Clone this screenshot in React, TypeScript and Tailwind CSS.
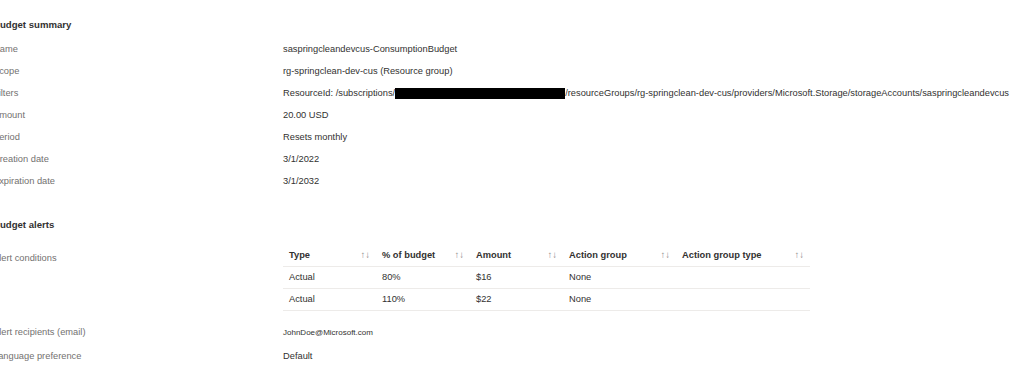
import { ReactNode } from "react";

const summary = [
  ["Name", "saspringcleandevcus-ConsumptionBudget"],
  ["Scope", "rg-springclean-dev-cus (Resource group)"],
  ["Filters", null],
  ["Amount", "20.00 USD"],
  ["Period", "Resets monthly"],
  ["Creation date", "3/1/2022"],
  ["Expiration date", "3/1/2032"],
];

const columns = [
  { label: "Type", w: "w-[93px]" },
  { label: "% of budget", w: "w-[94px]" },
  { label: "Amount", w: "w-[93px]" },
  { label: "Action group", w: "w-[113px]" },
  { label: "Action group type", w: "w-[134px]" },
];

const alerts = [
  ["Actual", "80%", "$16", "None", ""],
  ["Actual", "110%", "$22", "None", ""],
];

function Row({ label, children }: { label: string; children: ReactNode }) {
  return (
    <div className="flex h-[22px] items-center">
      <div className="w-[290px] shrink-0 text-[#737170]">{label}</div>
      <div className="whitespace-nowrap text-[#323130]">{children}</div>
    </div>
  );
}

function SortIcon() {
  return <span className="text-[9.5px] text-[#8a8886]">↑↓</span>;
}

export default function App() {
  return (
    <div className="h-[371px] w-[1024px] overflow-hidden bg-white">
      <div
        className="-ml-[7px] pt-[14px] text-[9.3px] text-[#323130]"
        style={{ fontFamily: '"Liberation Sans", Arial, sans-serif' }}
      >
        <div className="flex h-[22px] items-center text-[9.6px] font-bold">Budget summary</div>
        <div className="mt-[3px]">
          {summary.map(([label, value]) => (
            <Row key={label} label={label as string}>
              {value ?? (
                <>
                  ResourceId: /subscriptions/
                  <span className="inline-block h-[11px] w-[170px] bg-black align-middle" />
                  /resourceGroups/rg-springclean-dev-cus/providers/Microsoft.Storage/storageAccounts/saspringcleandevcus
                </>
              )}
            </Row>
          ))}
        </div>

        <div className="mt-[21px] flex h-[22px] items-center text-[9.6px] font-bold">Budget alerts</div>

        <div className="mt-[9px] flex">
          <div className="w-[290px] shrink-0 pt-[3px] text-[#737170]">
            <div className="flex h-[22px] items-center">Alert conditions</div>
          </div>
          <div>
            <div className="flex h-[22px] items-center border-b border-[#edebe9] font-semibold">
              {columns.map((c) => (
                <div key={c.label} className={`${c.w} flex items-center justify-between px-[6px]`}>
                  <span>{c.label}</span>
                  <SortIcon />
                </div>
              ))}
            </div>
            {alerts.map((r, i) => (
              <div key={i} className="flex h-[22px] items-center border-b border-[#edebe9]">
                {r.map((cell, j) => (
                  <div key={j} className={`${columns[j].w} px-[6px]`}>
                    {cell}
                  </div>
                ))}
              </div>
            ))}
          </div>
        </div>

        <div className="mt-[11px] flex h-[22px] items-center">
          <div className="w-[290px] shrink-0 text-[#737170]">Alert recipients (email)</div>
          <div className="text-[8px]">JohnDoe@Microsoft.com</div>
        </div>
        <div className="mt-[2px] flex h-[22px] items-center">
          <div className="w-[290px] shrink-0 text-[#737170]">Language preference</div>
          <div>Default</div>
        </div>
      </div>
    </div>
  );
}
